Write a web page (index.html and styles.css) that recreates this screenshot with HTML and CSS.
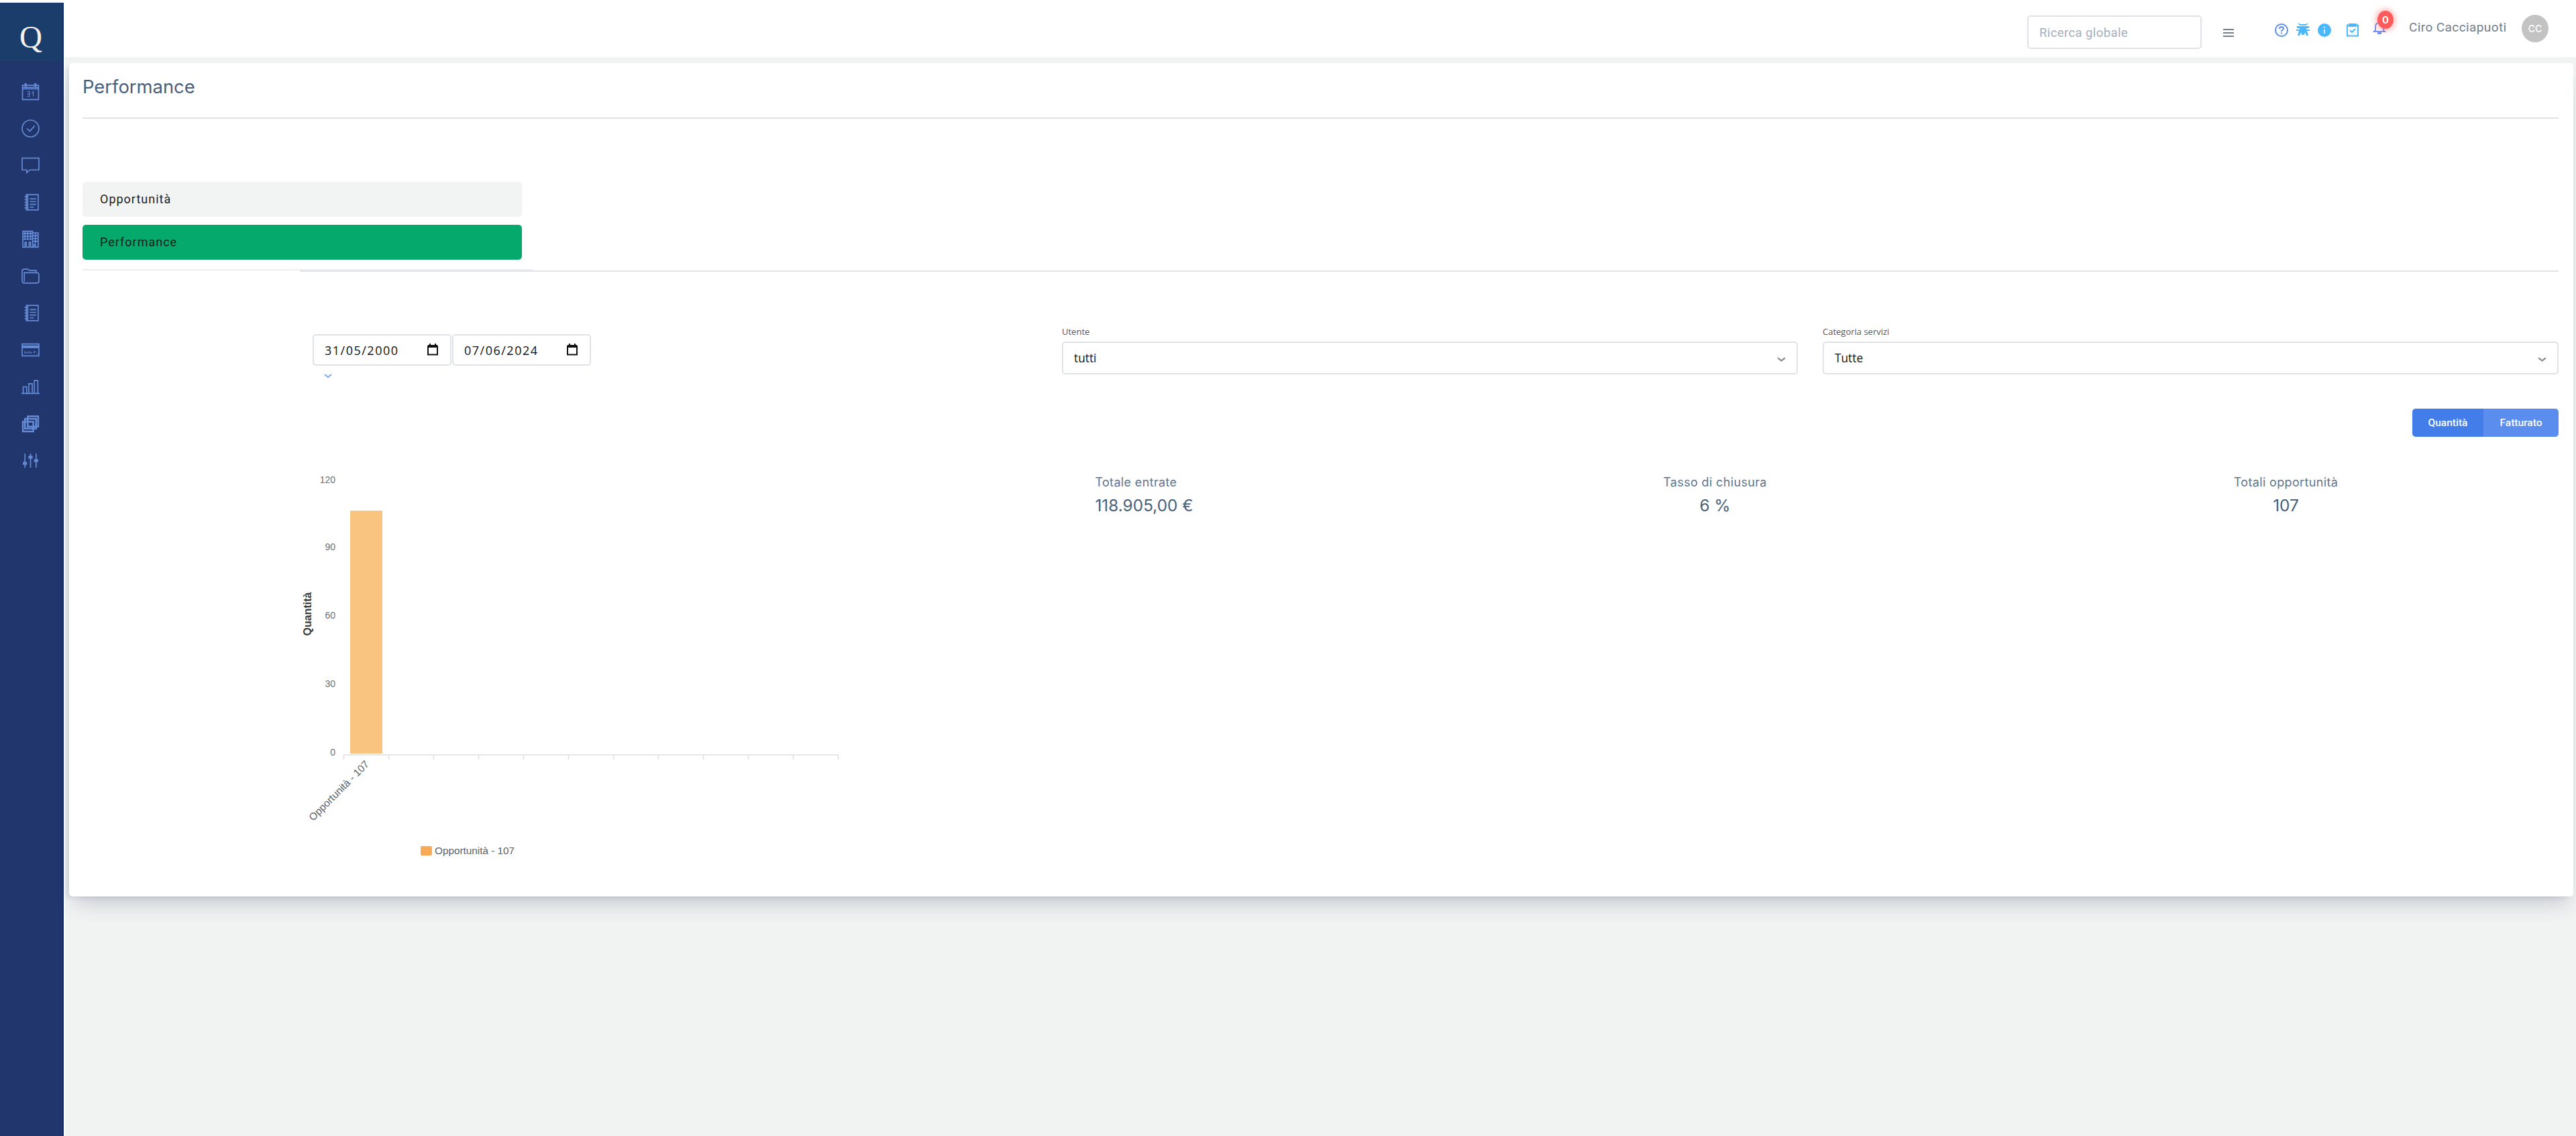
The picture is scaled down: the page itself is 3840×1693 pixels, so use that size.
FILE: index.html
```html
<!DOCTYPE html>
<html lang="it">
<head>
    <meta charset="UTF-8">
    <title>Performance</title>
    <link rel="stylesheet" href="styles.css">
</head>
<body>
    <nav class="sidebar">
        <div class="logo">Q</div>
        <ul class="menu">
            <li><svg viewBox="0 0 26 26"><path d="M1.5 4h23v20.500h-23zM1.500 9h23M1.500 7h23" /><path d="M6 1v5M20 1v5" stroke-width="3" /><path d="M8.500 13h3v3.500h-3M11.500 16v4h-3M17 20v-7l-2 2" stroke-width="1" /></svg></li>
            <li><svg viewBox="0 0 26 26"><circle cx="13" cy="13" r="12" /><path d="M8 13l4 4 7-8" /></svg></li>
            <li><svg viewBox="0 0 26 26"><path d="M1 2.500h24v17H12l-4.500 4v-4H1z" /></svg></li>
            <li><svg viewBox="0 0 26 26"><path d="M7 2h17v22H7zM9 2v22M4.500 5h4M4.500 9h4M4.500 13h4M4.500 17h4M4.500 21h4M12 8h9M12 12h9M12 16h9M12 20h6" /></svg></li>
            <li><svg viewBox="0 0 26 26"><path d="M2 1.500h14v23h-3v-7h-2v7H7v-7H5v7H2zM16 4h8v20.500h-4v-4h-2v4h-2M2 5h14M2 9h14M2 13h14M5 2v12M9 2v12M13 2v12M16 8h8M16 12h8M16 16h8M20 5v14" /></svg></li>
            <li><svg viewBox="0 0 26 26"><path d="M1 19V6q0-3 3-3h5l3 2h9v3q4 0 4 3v9q0 3-3 3H4q-3 0-3-4zM4 21V8h17" /></svg></li>
            <li><svg viewBox="0 0 26 26"><path d="M7 2h17v22H7zM9 2v22M4.500 5h4M4.500 9h4M4.500 13h4M4.500 17h4M4.500 21h4M12 8h9M12 12h9M12 16h9M12 20h6" /></svg></li>
            <li><svg viewBox="0 0 26 26"><path d="M1 4.500h24v17H1z" /><path d="M1 8.500h24" stroke-width="4" /><path d="M5 18v-3M8 18v-2M11 18v-3M14 18v-2M17 17l3-2M22 18h1" stroke-width="1.500" /></svg></li>
            <li><svg viewBox="0 0 26 26"><path d="M0 22.500h26M2.500 22v-9h5v9M10.500 22V8.500h5V22M18.500 22V4h5v18" /></svg></li>
            <li><svg viewBox="0 0 26 26"><path stroke-width="2.400" d="M2 10h15v14H2zM5 6h16v14H5zM9 2.500h15V17H9z" /></svg></li>
            <li><svg viewBox="0 0 26 26"><path d="M5 3v20M13 3v20M21 3v20" /><path d="M2 17h6M10 8h6M18 13h6" stroke-width="4" /></svg></li>
        </ul>
    </nav>

    <div class="main">
        <header class="topbar">
            <input class="search" type="text" placeholder="Ricerca globale">
            <svg class="burger" viewBox="0 0 16 14"><path d="M0 2h16M0 7h16M0 12h16" /></svg>
            <svg class="tool help" viewBox="0 0 20 20"><circle cx="10" cy="10" r="9" /><path d="M7 8q0-3 3-3t3 2.500q0 1.500-3 3.500v1M10 13.500v2" /></svg>
            <svg class="tool bug" viewBox="0 0 20 20"><path d="M3 0q1 2 4 2h6q3 0 4-2v2q-1 2-4 2H7Q4 4 3 2zM1 5h18v3h-4v2h5v2h-4l2 7h-3l-2-5-1 4H8l-1-4-2 5H2l2-7H0v-2h5V8H1z" /></svg>
            <svg class="tool info" viewBox="0 0 20 20"><circle cx="10" cy="10" r="10" /><path d="M10 5v2M10 9v6" /></svg>
            <svg class="tool clip" viewBox="0 0 20 20"><path d="M2 2.500h16v16H2zM6 10l3 3 5-5" /><path d="M4 2.500h12" stroke-width="5" /></svg>
            <div class="bell">
                <svg viewBox="0 0 20 20"><path d="M4 13V8q0-6 6-6t6 6v5l2 2H2z" /><path d="M7 17.500h6" stroke-width="3" /></svg>
                <span class="badge">0</span>
            </div>
            <span class="user">Ciro Cacciapuoti</span>
            <span class="avatar">CC</span>
        </header>

        <div class="card">
            <h1 class="title">Performance</h1>

            <div class="tabs">
                <a class="tab">Opportunità</a>
                <a class="tab active">Performance</a>
            </div>
            <div class="divider"></div>

            <div class="filters">
                <div class="dates">
                    <div class="date-row">
                        <div class="date"><span>31/05/2000</span><svg viewBox="0 0 16 18"><path d="M1 4h14v12.500H1z" /><path d="M1 4h14" stroke-width="4" /><path d="M4 0v4M12 0v4" /></svg></div>
                        <div class="date"><span>07/06/2024</span><svg viewBox="0 0 16 18"><path d="M1 4h14v12.500H1z" /><path d="M1 4h14" stroke-width="4" /><path d="M4 0v4M12 0v4" /></svg></div>
                    </div>
                    <svg class="more" viewBox="0 0 12 7"><path d="M1 1l5 4 5-4" /></svg>
                </div>
                <div class="field">
                    <label>Utente</label>
                    <div class="select"><span>tutti</span><svg viewBox="0 0 12 7"><path d="M1 1l5 4 5-4" /></svg></div>
                </div>
                <div class="field">
                    <label>Categoria servizi</label>
                    <div class="select"><span>Tutte</span><svg viewBox="0 0 12 7"><path d="M1 1l5 4 5-4" /></svg></div>
                </div>
            </div>

            <div class="switch">
                <button class="btn on">Quantità</button>
                <button class="btn">Fatturato</button>
            </div>

            <div class="report">
                <svg class="chart" viewBox="440 690 840 610">
                    <g class="axis-label" text-anchor="end">
                        <text x="500" y="720">120</text>
                        <text x="500" y="820">90</text>
                        <text x="500" y="922">60</text>
                        <text x="500" y="1024">30</text>
                        <text x="500" y="1126">0</text>
                    </g>
                    <text class="axis-title" text-anchor="middle" transform="translate(464 915) rotate(-90)">Quantità</text>
                    <rect class="bar" x="522" y="761" width="48" height="362" />
                    <path class="axis" d="M512 1125h738M512.500 1125v7M579.500 1125v7M646.500 1125v7M713.500 1125v7M780.500 1125v7M847.500 1125v7M914.500 1125v7M981.500 1125v7M1048.500 1125v7M1115.500 1125v7M1182.500 1125v7M1249.500 1125v7" />
                    <text class="cat" text-anchor="end" transform="translate(551 1140) rotate(-45)">Opportunità - 107</text>
                    <rect class="key" x="627" y="1261" width="17" height="14" rx="2" />
                    <text class="legend" x="648" y="1273">Opportunità - 107</text>
                </svg>
                <div class="stats">
                    <div class="stat"><div><h5>Totale entrate</h5><h4>118.905,00 €</h4></div></div>
                    <div class="stat center"><div><h5>Tasso di chiusura</h5><h4>6 %</h4></div></div>
                    <div class="stat center"><div><h5>Totali opportunità</h5><h4>107</h4></div></div>
                </div>
            </div>
        </div>
    </div>
</body>
</html>
```
FILE: styles.css
```css
* {
    box-sizing: border-box;
}

body {
    margin: 0;
    display: flex;
    min-height: 100vh;
    background-color: #fff;
    font-family: Inter, Roboto, sans-serif;
    color: #475f7b;
}

h1, h4, h5, ul {
    margin: 0;
    padding: 0;
    font-weight: 400;
}

svg {
    display: block;
    fill: none;
    stroke: currentColor;
    stroke-width: 2;
    flex: none;
}

.sidebar {
    width: 95px;
    margin-top: 4px;
    background-color: #21366d;
    border-right: 2px solid #142d69;
    flex: none;
}

.logo {
    height: 87px;
    padding: 25px 0 0 29px;
    background-color: #1a3d6b;
    color: #f5f0ea;
    font: 47px/52px "Liberation Serif", serif;
}

.menu {
    list-style: none;
    padding-top: 18px;
}

.menu li {
    height: 55px;
    display: flex;
    align-items: center;
    padding-left: 32px;
    color: #668bd6;
}

.menu svg {
    width: 27px;
    height: 27px;
    stroke-width: 1.6;
}

.main {
    flex: 1;
    margin-left: 2px;
    background-color: #f1f3f3;
}

.topbar {
    height: 85px;
    display: flex;
    align-items: flex-start;
    background-color: #fff;
    padding-left: 2925px;
    color: #727e8c;
}

.search {
    width: 260px;
    height: 50px;
    margin-top: 23px;
    padding: 2px 16px 0;
    border: 2px solid #dfe3e7;
    border-radius: 5px;
    font: 18.5px Roboto, sans-serif;
    letter-spacing: 0.4px;
}

.search::placeholder {
    color: #a3afbd;
}

.burger {
    width: 16px;
    height: 14px;
    margin: 42px 0 0 32px;
    color: #727e8c;
}

.tool {
    width: 20px;
    height: 20px;
    margin-top: 35px;
    color: #4ab8fb;
}

.help {
    margin-left: 61px;
    color: #5a8dee;
}

.bug {
    margin-left: 12px;
    margin-top: 34px;
    fill: currentColor;
    stroke: none;
}

.info {
    margin-left: 12px;
}

.info circle {
    fill: currentColor;
    stroke: none;
}

.info path {
    stroke: #d9f1ff;
}

.clip {
    margin-left: 22px;
}

.bell {
    position: relative;
    margin: 32px 0 0 20px;
    color: #7595ef;
}

.bell svg {
    width: 20px;
    height: 20px;
}

.badge {
    position: absolute;
    left: 7px;
    top: -16px;
    width: 24px;
    height: 27px;
    border-radius: 50%;
    background-color: #ff5b5c;
    box-shadow: 0 0 8px 2px rgba(255, 91, 92, 0.5);
    color: #fff;
    font-size: 15px;
    font-weight: 600;
    line-height: 27px;
    text-align: center;
}

.user {
    margin: 29px 0 0 34px;
    width: 168px;
    font: 19px/24px Roboto, sans-serif;
    letter-spacing: 0.4px;
}

.avatar {
    width: 40px;
    height: 41px;
    margin-top: 22px;
    border-radius: 50%;
    background-color: #c3c3c3;
    color: #fff;
    font-size: 14px;
    font-weight: 500;
    line-height: 41px;
    text-align: center;
}

.card {
    height: 1242px;
    margin: 9px 4px 0 6px;
    padding: 0 22px 0 20px;
    background-color: #fff;
    border-radius: 5px;
    box-shadow: 0 18px 28px -8px rgba(25, 42, 70, 0.2), -6px 4px 6px -2px rgba(25, 42, 70, 0.1);
}

.title {
    height: 83px;
    padding-top: 18px;
    border-bottom: 2px solid #dfe3e7;
    font-size: 27.4px;
    line-height: 34px;
}

.tabs {
    width: 671px;
    margin-top: 94px;
    padding: 0 16px 14px 0;
    border-bottom: 2px solid #eceeef;
}

.tab {
    display: block;
    height: 52px;
    padding-left: 26px;
    border-radius: 5px;
    background-color: #f2f4f4;
    color: #1c1c1c;
    font: 18px/52px Roboto, sans-serif;
    letter-spacing: 1px;
}

.tab.active {
    margin-top: 12px;
    background-color: #05a96c;
}

.divider {
    height: 2px;
    margin-left: 324px;
    background-color: #dfe3e7;
}

.filters {
    height: 122px;
    margin-top: 82px;
    display: flex;
    gap: 37px;
}

.dates {
    width: 1423px;
    padding: 11px 0 0 343px;
}

.date-row {
    display: flex;
    gap: 1px;
}

.date {
    width: 207px;
    height: 47px;
    padding: 1px 18px 0 16px;
    display: flex;
    align-items: center;
    justify-content: space-between;
    border: 2px solid #dfe3e7;
    border-radius: 5px;
    color: #111;
    font: 18px "Open Sans", sans-serif;
    letter-spacing: 1.5px;
}

.date svg {
    width: 16px;
    height: 18px;
    margin-bottom: 3px;
}

.more {
    width: 12px;
    height: 7px;
    margin: 12px 0 0 17px;
    color: #7ba5f5;
}

.field {
    flex: 1;
}

.field label {
    display: block;
    height: 22px;
    color: #555;
    font: 13px/14px "Open Sans", sans-serif;
}

.select {
    height: 49px;
    padding: 0 16px;
    display: flex;
    align-items: center;
    justify-content: space-between;
    border: 2px solid #dfe3e7;
    border-radius: 5px;
    color: #111;
    font: 17.3px "Open Sans", sans-serif;
}

.select svg {
    width: 13px;
    height: 8px;
    margin-top: 4px;
    color: #888;
}

.switch {
    display: flex;
    justify-content: flex-end;
}

.btn {
    width: 112px;
    height: 42px;
    border: 0;
    padding: 0;
    border-radius: 0 5px 5px 0;
    background-color: #5a8dee;
    color: #fff;
    font: 500 15.5px Roboto, sans-serif;
}

.btn.on {
    width: 106px;
    border-radius: 5px 0 0 5px;
    background-color: #437dea;
}

.report {
    display: flex;
    margin-top: 39px;
}

.chart {
    width: 840px;
    height: 610px;
    margin-left: 317px;
    stroke: none;
    font-family: "Liberation Sans", Arial, sans-serif;
}

.axis-label {
    fill: #6b7075;
    font-size: 14px;
}

.axis-title {
    fill: #373d3f;
    font-size: 16px;
    font-weight: 700;
}

.bar {
    fill: #f9c380;
}

.axis {
    stroke: #e0e0e0;
    stroke-width: 1.5;
}

.cat, .legend {
    fill: #5d6266;
    font-size: 15.3px;
}

.key {
    fill: #f8ab56;
}

.stats {
    flex: none;
    width: 2553px;
    display: flex;
    margin-right: -22px;
    padding-top: 16px;
}

.stat {
    flex: 1;
    display: flex;
    justify-content: center;
}

.stat h5 {
    font-size: 18px;
    line-height: 26px;
    letter-spacing: 0.35px;
    color: #60758e;
}

.stat h4 {
    font-size: 24.4px;
    line-height: 42px;
}

.stat.center {
    text-align: center;
}
```
